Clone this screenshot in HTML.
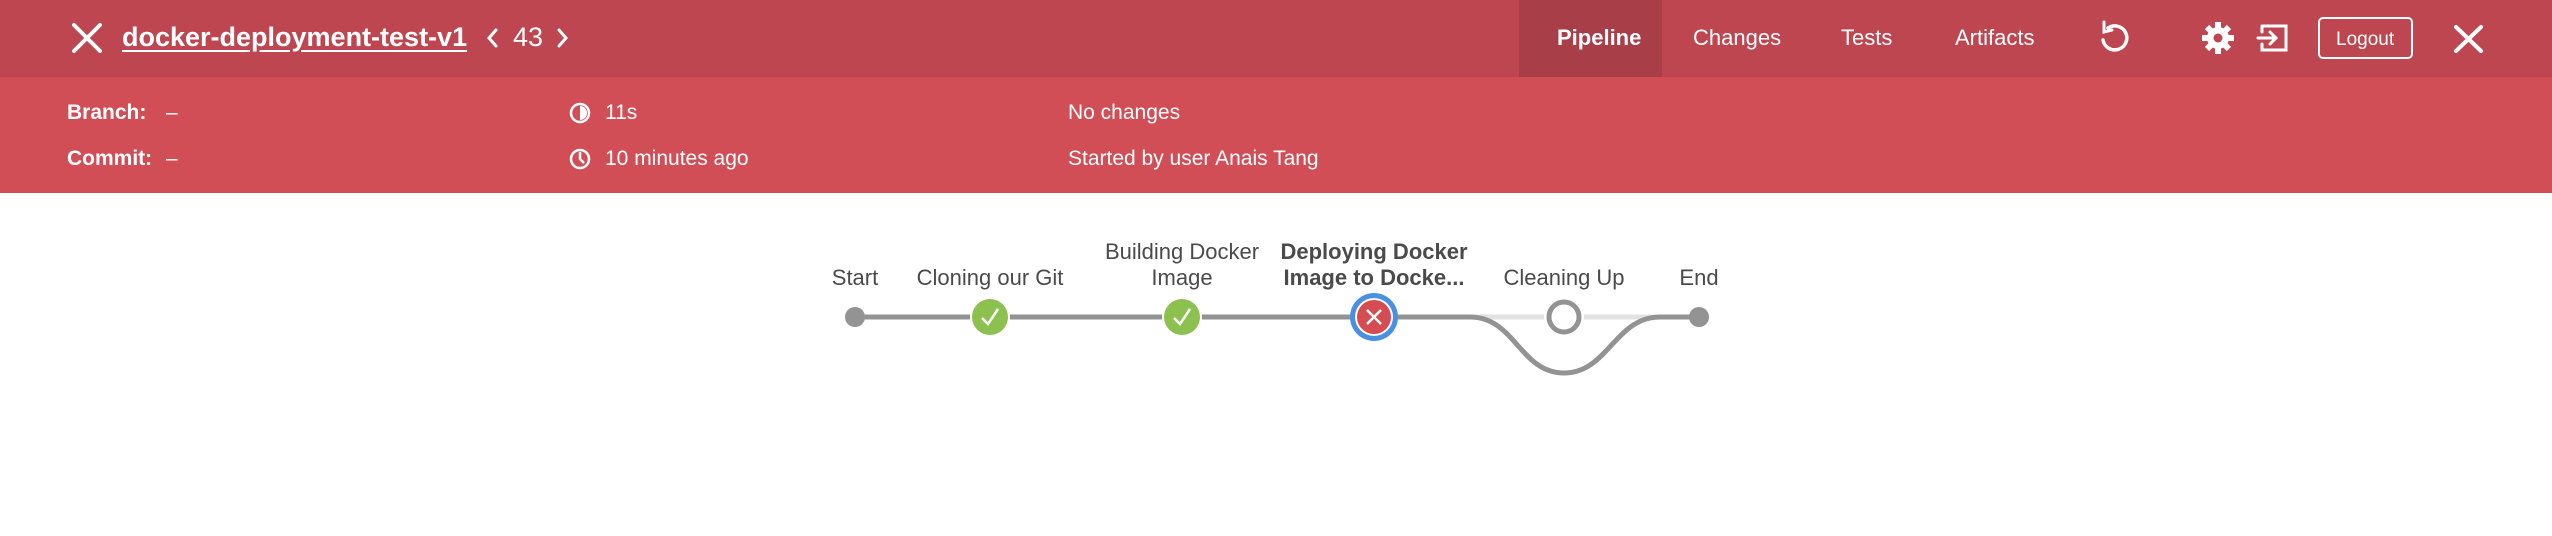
<!DOCTYPE html>
<html><head><meta charset="utf-8"><style>
*{margin:0;padding:0;box-sizing:border-box}
body{width:2552px;height:536px;background:#fff;font-family:"Liberation Sans",sans-serif;position:relative;overflow:hidden}
.top{position:absolute;left:0;top:0;width:2552px;height:77px;background:#bd4650}
.band{position:absolute;left:0;top:77px;width:2552px;height:116px;background:#d24e57}
.t{position:absolute;color:#fff;white-space:nowrap}
.tab{position:absolute;left:1519px;top:0;width:143px;height:77px;background:#a83f48}
.lbl{position:absolute;color:#4a4a4a;font-size:22px;text-align:center;white-space:nowrap;line-height:26px;transform:translateX(-50%)}
</style></head><body>
<div class="top"></div><div class="band"></div><div class="tab"></div>
<svg style="position:absolute;left:0;top:0" width="2552" height="193">
<g stroke="#fff" stroke-width="4" stroke-linecap="round" fill="none">
<path d="M74 25L100 51M100 25L74 51"/>
<path d="M2456 27L2481 51M2481 27L2456 51"/>
<path d="M496 30L489 38L496 46" stroke-width="3"/>
<path d="M559 30L566 38L559 46" stroke-width="3"/>
<path d="M2108 28A12 12 0 1 1 2103 40" stroke-width="3.5"/>
<path d="M2104 22L2104 32L2112 30" stroke-width="3" fill="none"/>
<path d="M2262 26H2286V50H2262V44M2262 32V26M2258 38H2276M2270 32L2276 38L2270 44" stroke-width="3"/>
</g>
<g fill="#fff"><circle cx="2218" cy="38" r="11"/>
<g stroke="#fff" stroke-width="6"><path d="M2218 22V54M2202 38H2234M2207 27L2229 49M2229 27L2207 49"/></g>
<circle cx="2218" cy="38" r="4.5" fill="#bd4650"/></g>
<rect x="2319" y="18" width="93" height="40" rx="4" fill="none" stroke="#fff" stroke-width="2"/>
<g fill="none" stroke="#fff" stroke-width="2.5"><circle cx="580" cy="113" r="9"/><circle cx="580" cy="159" r="9"/><path d="M580 152V159L584 163"/></g>
<path d="M580 106A7 7 0 0 1 580 120Z" fill="#fff"/>
</svg>
<div class="t" style="left:122px;top:22px;font-size:27px;font-weight:bold;text-decoration:underline;text-underline-offset:4px">docker-deployment-test-v1</div>
<div class="t" style="left:513px;top:22px;font-size:27px">43</div>
<div class="t" style="left:1557px;top:25px;font-size:22px;font-weight:bold">Pipeline</div>
<div class="t" style="left:1693px;top:25px;font-size:22px">Changes</div>
<div class="t" style="left:1841px;top:25px;font-size:22px">Tests</div>
<div class="t" style="left:1955px;top:25px;font-size:22px">Artifacts</div>
<div class="t" style="left:2336px;top:29px;font-size:19px">Logout</div>
<div class="t" style="left:67px;top:101px;font-size:21px;font-weight:bold">Branch:</div>
<div class="t" style="left:166px;top:101px;font-size:21px">–</div>
<div class="t" style="left:67px;top:147px;font-size:21px;font-weight:bold">Commit:</div>
<div class="t" style="left:166px;top:147px;font-size:21px">–</div>
<div class="t" style="left:605px;top:101px;font-size:21px">11s</div>
<div class="t" style="left:605px;top:147px;font-size:21px">10 minutes ago</div>
<div class="t" style="left:1068px;top:101px;font-size:21px">No changes</div>
<div class="t" style="left:1068px;top:147px;font-size:21px">Started by user Anais Tang</div>
<svg style="position:absolute;left:0;top:0" width="2552" height="536">
<path d="M1470 317H1660" stroke="#e2e2e2" stroke-width="5"/>
<path d="M855 317H1470C1515 317 1520 373 1564 373C1608 373 1615 317 1660 317H1699" stroke="#949393" stroke-width="5" fill="none"/>
<circle cx="855" cy="317" r="10" fill="#949393"/>
<circle cx="1699" cy="317" r="10" fill="#949393"/>
<circle cx="990" cy="317" r="20" fill="#fff"/><circle cx="990" cy="317" r="18" fill="#8cc04f"/>
<circle cx="1182" cy="317" r="20" fill="#fff"/><circle cx="1182" cy="317" r="18" fill="#8cc04f"/>
<path d="M982 318L988 324L998 309M1174 318L1180 324L1190 309" stroke="#fff" stroke-width="2.5" fill="none"/>
<circle cx="1374" cy="317" r="24" fill="#4a90e2"/><circle cx="1374" cy="317" r="19" fill="#fff"/><circle cx="1374" cy="317" r="17" fill="#d54c53"/>
<path d="M1367 310L1381 324M1381 310L1367 324" stroke="#fff" stroke-width="2.5"/>
<circle cx="1564" cy="317" r="20" fill="#fff"/><circle cx="1564" cy="317" r="15" fill="#fff" stroke="#949393" stroke-width="5"/>
</svg>
<div class="lbl" style="left:855px;top:265px">Start</div>
<div class="lbl" style="left:990px;top:265px">Cloning our Git</div>
<div class="lbl" style="left:1182px;top:239px">Building Docker<br>Image</div>
<div class="lbl" style="left:1374px;top:239px;font-weight:bold">Deploying Docker<br>Image to Docke...</div>
<div class="lbl" style="left:1564px;top:265px">Cleaning Up</div>
<div class="lbl" style="left:1699px;top:265px">End</div>
</body></html>
